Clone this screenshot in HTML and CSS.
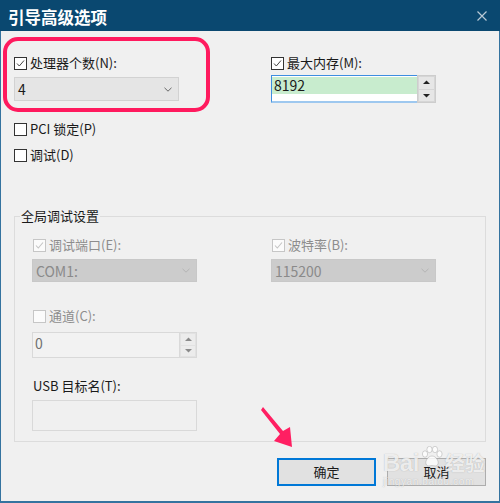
FILE: index.html
```html
<!DOCTYPE html>
<html lang="zh-CN">
<head>
<meta charset="utf-8">
<title>引导高级选项</title>
<link rel="stylesheet" href="styles.css">
</head>
<body>
<div class="window">
  <div class="titlebar">
    <span class="title">引导高级选项</span>
    <svg class="close" width="10" height="10" viewBox="0 0 10 10"><path d="M0.5 0.5 L9.5 9.5 M9.5 0.5 L0.5 9.5" stroke="#b9c9d6" stroke-width="1.2" fill="none"/></svg>
  </div>
  <div class="body">
    <div class="top">
      <div class="field">
        <div class="check"><span class="box"><svg width="11" height="11" viewBox="0 0 11 11"><path d="M2 5.5 L4.3 8 L9 2.5" stroke="#444" stroke-width="1" fill="none"/></svg></span>处理器个数(N):</div>
        <div class="combo c-cpu"><span>4</span><svg width="8" height="5" viewBox="0 0 8 5"><path d="M0.5 0.8 L4 4.2 L7.5 0.8" stroke="#666" stroke-width="1" fill="none"/></svg></div>
      </div>
      <div class="field">
        <div class="check"><span class="box"><svg width="11" height="11" viewBox="0 0 11 11"><path d="M2 5.5 L4.3 8 L9 2.5" stroke="#444" stroke-width="1" fill="none"/></svg></span>最大内存(M):</div>
        <div class="spin mem">
          <div class="spin-field"><div class="sel">8192</div></div>
          <div class="spin-btns">
            <span class="sb"><svg width="7" height="5" viewBox="0 0 7 5"><path d="M0 4 L3.5 0.5 L7 4 Z" fill="#222"/></svg></span>
            <span class="sb"><svg width="7" height="5" viewBox="0 0 7 5"><path d="M0 1 L3.5 4.5 L7 1 Z" fill="#222"/></svg></span>
          </div>
        </div>
      </div>
    </div>
    <div class="check pci"><span class="box"></span>PCI 锁定(P)</div>
    <div class="check dbg"><span class="box"></span>调试(D)</div>
    <fieldset class="group">
      <legend>全局调试设置</legend>
      <div class="group-inner">
        <div class="grow">
          <div class="field">
            <div class="check dis"><span class="box"><svg width="11" height="11" viewBox="0 0 11 11"><path d="M2 5.5 L4.3 8 L9 2.5" stroke="#c4c4c4" stroke-width="1.1" fill="none"/></svg></span>调试端口(E):</div>
            <div class="combo dis-combo"><span>COM1:</span><svg width="8" height="5" viewBox="0 0 8 5"><path d="M0.5 0.8 L4 4.2 L7.5 0.8" stroke="#b4b4b4" stroke-width="1" fill="none"/></svg></div>
          </div>
          <div class="field">
            <div class="check dis"><span class="box"><svg width="11" height="11" viewBox="0 0 11 11"><path d="M2 5.5 L4.3 8 L9 2.5" stroke="#c4c4c4" stroke-width="1.1" fill="none"/></svg></span>波特率(B):</div>
            <div class="combo dis-combo"><span>115200</span><svg width="8" height="5" viewBox="0 0 8 5"><path d="M0.5 0.8 L4 4.2 L7.5 0.8" stroke="#b4b4b4" stroke-width="1" fill="none"/></svg></div>
          </div>
        </div>
        <div class="check dis chan"><span class="box"></span>通道(C):</div>
        <div class="spin dis-spin">
          <div class="spin-field"><span class="val">0</span></div>
          <div class="spin-btns">
            <span class="sb"><svg width="7" height="5" viewBox="0 0 7 5"><path d="M0 4 L3.5 0.5 L7 4 Z" fill="#8a8a8a"/></svg></span>
            <span class="sb"><svg width="7" height="5" viewBox="0 0 7 5"><path d="M0 1 L3.5 4.5 L7 1 Z" fill="#8a8a8a"/></svg></span>
          </div>
        </div>
        <div class="label usb">USB 目标名(T):</div>
        <div class="textbox"></div>
      </div>
    </fieldset>
    <div class="buttons">
      <button class="btn default">确定</button>
      <button class="btn">取消</button>
    </div>
  </div>

  <div class="highlight"></div>
  <svg class="arrow" width="45" height="50" viewBox="0 0 45 50"><polygon points="8,6 28,30 35,26 37,46 19,40 25,33 6,9" fill="#ff1f62"/></svg>
  <div class="wm">
    <div class="wm-top">
      <span class="wm-bai">Bai</span>
      <svg class="paw" width="24" height="22" viewBox="0 0 24 22">
        <g fill="rgba(255,255,255,0.8)" stroke="rgba(150,150,150,0.5)" stroke-width="0.8">
          <ellipse cx="5" cy="8" rx="2.6" ry="3.2"/>
          <ellipse cx="9.5" cy="3.5" rx="2.6" ry="3.2"/>
          <ellipse cx="15" cy="3.5" rx="2.6" ry="3.2"/>
          <ellipse cx="19.5" cy="8" rx="2.6" ry="3.2"/>
          <path d="M12 10 C16 10 19 15 18 18 C17 21 14 19.5 12 19.5 C10 19.5 7 21 6 18 C5 15 8 10 12 10 Z"/>
        </g>
      </svg>
      <span class="wm-jy">经验</span>
    </div>
    <div class="wm-url">jingyan.baidu.com</div>
  </div>
</div>
</body>
</html>
```
FILE: styles.css
```css
html, body {
  margin: 0;
  padding: 0;
}
body {
  width: 500px;
  height: 503px;
  overflow: hidden;
  background: #f0f0f0;
  font-family: "Noto Sans CJK SC", "Noto Sans", sans-serif;
  color: #1a1a1a;
}
.window {
  position: relative;
  width: 500px;
  height: 503px;
  display: flex;
  flex-direction: column;
}
.titlebar {
  height: 31px;
  flex: none;
  background: #0a4870;
  display: flex;
  align-items: center;
  justify-content: space-between;
  padding: 0 13px 0 8px;
  box-sizing: border-box;
}
.title {
  color: #fff;
  font-size: 16.5px;
  font-weight: 700;
  line-height: 20px;
  margin-top: 2px;
}
.close {
  display: block;
  margin-top: 1px;
}
.body {
  flex: 1;
  background: #f0f0f0;
  border-left: 1px solid #34739f;
  border-right: 1px solid #34739f;
  border-bottom: 2px solid #34739f;
  padding: 24px 13px 0 13px;
  box-sizing: border-box;
}
.top {
  display: grid;
  grid-template-columns: 257px 1fr;
}
.field {
  display: flex;
  flex-direction: column;
}
.check {
  display: flex;
  align-items: center;
  gap: 3px;
  height: 16px;
  font-size: 13px;
  line-height: 16px;
  color: #1a1a1a;
}
.box {
  width: 13px;
  height: 13px;
  box-sizing: border-box;
  border: 1px solid #333;
  background: #fff;
  display: flex;
  align-items: center;
  justify-content: center;
  flex: none;
}
.box svg {
  display: block;
}
.combo {
  width: 165px;
  height: 24px;
  margin-top: 6px;
  box-sizing: border-box;
  background: #e5e5e5;
  border: 1px solid #d2d2d2;
  display: flex;
  align-items: center;
  justify-content: space-between;
  padding: 0 6px 0 3px;
  font-size: 14px;
  line-height: 18px;
}
.combo svg {
  display: block;
}
.spin {
  display: flex;
  width: 165px;
  box-sizing: border-box;
}
.mem {
  height: 28px;
  margin-top: 4px;
}
.spin-field {
  flex: 1;
  box-sizing: border-box;
}
.mem .spin-field {
  background: #fff;
  border: 1px solid #3d8ee0;
  border-bottom: 2px solid #9ec8ef;
  border-right: none;
  padding-top: 1px;
}
.sel {
  background: #c8ecce;
  height: 17px;
  line-height: 17px;
  font-size: 14px;
  padding-left: 2px;
}
.spin-btns {
  width: 19px;
  display: flex;
  flex-direction: column;
  gap: 1px;
  padding: 1px;
  box-sizing: border-box;
  border: 1px solid #cdcdcd;
  background: #d6d6d6;
}
.sb {
  flex: 1;
  background: #e6e6e6;
  display: flex;
  align-items: center;
  justify-content: center;
}
.sb svg {
  display: block;
}
.pci {
  margin-top: 18px;
}
.dbg {
  margin-top: 10px;
}
.group {
  margin: 45px 0 0 0;
  padding: 0;
  border: 1px solid #dcdcdc;
  min-width: 0;
}
.group legend {
  font-size: 13px;
  line-height: 16px;
  padding: 0 1px;
  margin-left: 5px;
  color: #1a1a1a;
}
.group-inner {
  display: flex;
  flex-direction: column;
  align-items: flex-start;
  padding: 0 0 10px 17px;
}
.grow {
  display: grid;
  grid-template-columns: 239px 1fr;
  margin-top: 13px;
  align-self: stretch;
}
.check.dis {
  color: #8d8d8d;
}
.check.dis .box {
  border-color: #c6c6c6;
  background: #fbfbfb;
  margin-left: 1px;
}
.dis-combo {
  height: 23px;
  background: #cccccc;
  border-color: #c8c8c8;
  color: #8a8a8a;
}
.chan {
  margin-top: 26px;
}
.dis-spin {
  height: 26px;
  margin-top: 8px;
}
.dis-spin .spin-field {
  border: 1px solid #d9d9d9;
  border-right: none;
  background: #f2f2f2;
  font-size: 14px;
  line-height: 20px;
  padding-left: 2px;
  color: #707070;
}
.dis-spin .spin-btns {
  width: 18px;
  border-color: #d9d9d9;
  background: #e2e2e2;
}
.dis-spin .sb {
  background: #ececec;
}
.label {
  font-size: 13px;
  line-height: 16px;
  color: #1a1a1a;
}
.usb {
  margin-top: 20px;
  margin-left: 1px;
}
.textbox {
  width: 165px;
  height: 31px;
  margin-top: 6px;
  box-sizing: border-box;
  border: 1px solid #d9d9d9;
  background: #f0f0f0;
}
.buttons {
  display: flex;
  justify-content: flex-end;
  gap: 11px;
  margin-top: 16px;
}
.btn {
  width: 99px;
  height: 28px;
  box-sizing: border-box;
  background: #e1e1e1;
  border: 1px solid #adadad;
  font-family: "Noto Sans CJK SC", "Noto Sans", sans-serif;
  font-size: 13px;
  line-height: 16px;
  color: #1a1a1a;
  padding: 0;
  margin: 0;
}
.btn.default {
  border-color: #0078d7;
  box-shadow: inset 0 0 0 1px #0078d7;
}
.highlight {
  position: absolute;
  left: 3px;
  top: 37px;
  width: 207px;
  height: 75px;
  box-sizing: border-box;
  border: 4px solid #ff1a5e;
  border-radius: 15px;
}
.arrow {
  position: absolute;
  left: 255px;
  top: 401px;
}
.wm {
  position: absolute;
  left: 383px;
  top: 446px;
  color: rgba(255, 255, 255, 0.78);
  text-shadow: 0 0 1px rgba(120, 120, 120, 0.55);
}
.wm-top {
  display: flex;
  align-items: flex-end;
  gap: 1px;
}
.wm-bai {
  font-family: "Liberation Sans", Arial, sans-serif;
  font-weight: 700;
  font-size: 24px;
  line-height: 26px;
  letter-spacing: -0.5px;
}
.paw {
  display: block;
  margin-bottom: 8px;
}
.wm-jy {
  font-size: 20px;
  line-height: 26px;
  font-weight: 700;
}
.wm-url {
  font-family: "Liberation Sans", Arial, sans-serif;
  font-size: 10px;
  line-height: 11px;
  letter-spacing: 0.6px;
}
```
